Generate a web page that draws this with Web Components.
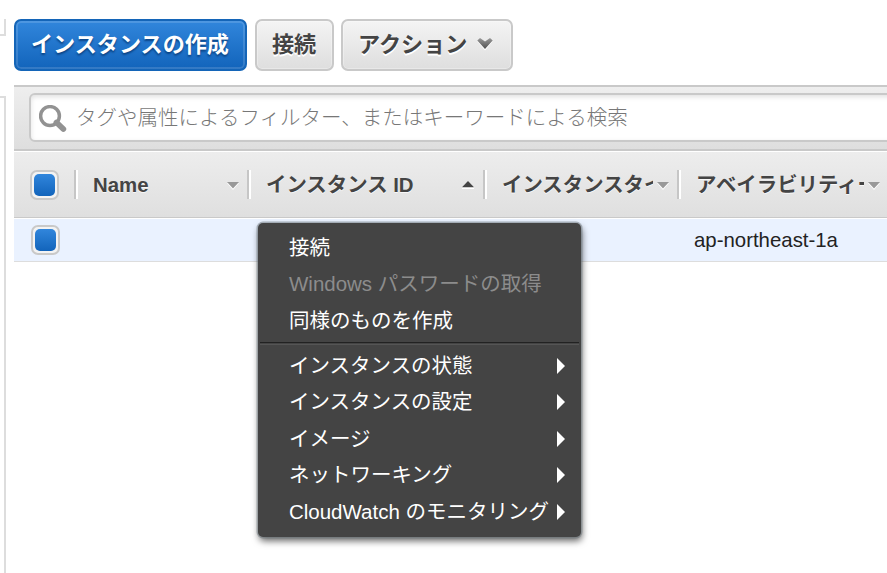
<!DOCTYPE html>
<html lang="ja">
<head>
<meta charset="utf-8">
<title>インスタンス</title>
<style>
html, body { margin: 0; height: 100%; overflow: hidden; background: #fff; }
body { font: 20.4px "Liberation Sans", "Noto Sans CJK JP", sans-serif; color: #222; }
</style>
</head>
<body>
<ec2-console></ec2-console>
<script>
function define(name, html) {
  const template = document.createElement('template');
  template.innerHTML = html;
  customElements.define(name, class extends HTMLElement {
    constructor() {
      super();
      this.attachShadow({ mode: 'open' }).append(template.content.cloneNode(true));
    }
  });
}

define('push-button', `
<style>
:host { display: flex; align-items: center; box-sizing: border-box; height: 52px; padding: 0 0 0 15px; border: 2px solid #c9c9c9; border-radius: 7px;
  background: linear-gradient(#f4f4f4, #dedede); box-shadow: inset 0 0 0 1px rgba(255,255,255,.3); color: #444; font-size: 22.1px; font-weight: bold; line-height: 32px; white-space: nowrap; text-shadow: 0 2px 0 #fff; flex: none; }
:host([primary]) { border-color: #1465b8; background: linear-gradient(#3186dc, #1264bb); box-shadow: inset 0 0 0 2px rgba(255,255,255,.14); color: #fff; text-shadow: 0 2px 2px #0b4485; }
</style><slot></slot>`);

define('chevron-icon', `
<style>:host { display: block; margin: -3px 0 0 10px; width: 16px; height: 12px; } svg { display: block; overflow: visible; }</style>
<svg width="16" height="12" viewBox="0 0 16 12"><defs><linearGradient id="g" x2="0" y2="1"><stop stop-color="#999"/><stop offset="1" stop-color="#505050"/></linearGradient></defs>
<path d="M0.5 3.5 3 1 8 4.500 13 1 15.500 3.500 8 12.500Z" fill="#fff"/><path d="M.3 2.500 3 0 8 3.500 13 0 15.700 2.500 8 11Z" fill="url(#g)"/></svg>`);

define('check-box', `
<style>
:host { display: block; box-sizing: border-box; width: 29px; height: 30px; padding: 2px; border: 2px solid #c9c9c9; border-radius: 7px; background: #f3f3f3; flex: none; }
i { display: block; height: 100%; border-radius: 5px; background: linear-gradient(#3186dc, #1264bb); }
</style><i></i>`);

define('search-field', `
<style>
:host { display: flex; align-items: center; box-sizing: border-box; height: 49px; margin-right: -10px; padding: 0 0 0 8px; border: 2px solid #c9c9c9; border-radius: 6px; background: #fff; box-shadow: inset 0 2px 5px rgba(0,0,0,.12); color: #777; line-height: 30px; white-space: nowrap; }
svg { display: block; flex: none; margin: 2px 9px 0 0; }
span { font-size: 20.5px; font-weight: 300; padding-top: 1px; }
</style>
<svg width="28" height="28" viewBox="0 0 28 28" fill="none" stroke="#929292"><circle cx="11" cy="11" r="9.400" stroke-width="3.500"/><path d="M17.500 17.500 24.300 24" stroke-width="5.800" stroke-linecap="round"/></svg>
<span><slot></slot></span>`);

define('column-head', `
<style>
:host { display: flex; align-items: center; box-sizing: border-box; height: 29px; border-left: 2px solid #c6c6c6; box-shadow: inset 2px 0 #fff; padding-left: 17px; font-weight: bold; color: #444; line-height: 30px; white-space: nowrap; flex: none; }
span { flex: 1; min-width: 0; overflow: hidden; text-shadow: 0 1px #f8f8f8; }
svg { display: block; flex: none; margin: 0 8px 0 4px; overflow: visible; }
.up { display: none; margin-right: 9px; }
:host([sorted]) .up { display: block; }
:host([sorted]) .down { display: none; }
</style>
<span><slot></slot></span>
<svg class="down" width="12" height="8" viewBox="0 0 12 8"><path d="M0 2H12L6 9Z" fill="#fff"/><path d="M0 1H12L6 7.500Z" fill="#999"/></svg>
<svg class="up" width="12" height="8" viewBox="0 0 12 8"><path d="M0 6H12V8H0Z" fill="#fff"/><path d="M0 6.300H12L6 0Z" fill="#444"/></svg>`);

define('side-rail', `
<style>
:host { display: flex; flex-direction: column; gap: 60px; box-sizing: border-box; width: 14px; padding: 19px 8px 0 0; flex: none; }
div { box-sizing: border-box; border-right: 2px solid #ddd; }
.top { height: 17px; border-bottom: 2px solid #ddd; }
.rest { flex: 1; border-top: 2px solid #ddd; }
</style><div class="top"></div><div class="rest"></div>`);

define('menu-item', `
<style>
:host { display: flex; align-items: center; justify-content: space-between; height: 36.5px; padding: 0 16px 0 31px; color: #fff; white-space: nowrap; line-height: 30px; font-size: 20.5px; }
:host([disabled]) { color: #8c8c8c; }
span { letter-spacing: -.01px; }
svg { display: none; flex: none; }
:host([more]) svg { display: block; }
</style><span><slot></slot></span>
<svg width="8" height="16" viewBox="0 0 8 16"><path d="M0 0 8 8 0 16Z" fill="#fff"/></svg>`);

define('context-menu', `
<style>
:host { display: block; box-sizing: border-box; width: 323px; height: 314px; padding-top: 6.500px; border-radius: 5px; background: #444; box-shadow: 0 0 0 1.5px rgba(110,120,125,.5), 1px 4px 7px rgba(0,0,0,.6); }
hr { height: 1px; margin: 3px 2px 4.500px; border: 0; background: #222; box-shadow: 0 2px #555; }
</style>
<menu-item>接続</menu-item>
<menu-item disabled>Windows パスワードの取得</menu-item>
<menu-item>同様のものを作成</menu-item>
<hr>
<menu-item more>インスタンスの状態</menu-item>
<menu-item more>インスタンスの設定</menu-item>
<menu-item more>イメージ</menu-item>
<menu-item more>ネットワーキング</menu-item>
<menu-item more>CloudWatch のモニタリング</menu-item>`);

define('ec2-console', `
<style>
:host { display: flex; height: 100%; overflow: hidden; }
main { flex: 1; min-width: 0; padding-top: 19px; }
.tools { display: flex; margin-bottom: 14px; }
.filter { box-sizing: border-box; height: 66px; padding: 6px 0 0 15px; border: solid #c9c9c9; border-width: 2px 0; background: linear-gradient(#eee, #dedede); }
.head { display: flex; align-items: center; box-sizing: border-box; height: 67px; padding-left: 16px; border-top: 1px solid #fff; border-bottom: 1px solid #c9c9c9; background: linear-gradient(#ededed, #dfdfdf); }
.row { display: flex; align-items: center; box-sizing: border-box; height: 44px; padding-left: 17px; border-top: 1px solid #fff; border-bottom: 1px solid #ddd; background: #eaf2ff; color: #222; }
.row span { margin-left: 634px; }
context-menu { position: absolute; left: 258px; top: 223px; }
</style>
<side-rail></side-rail>
<main>
  <div class="tools">
    <push-button primary style="width:233px">インスタンスの作成</push-button>
    <push-button style="width:79px;margin:0 7px 0 8px">接続</push-button>
    <push-button style="width:172px">アクション<chevron-icon></chevron-icon></push-button>
  </div>
  <div class="filter"><search-field>タグや属性によるフィルター、またはキーワードによる検索</search-field></div>
  <div class="head">
    <check-box></check-box>
    <column-head style="width:173px;margin-left:15px">Name</column-head>
    <column-head sorted style="width:236px">インスタンス ID</column-head>
    <column-head style="width:194px">インスタンスタイプ</column-head>
    <column-head style="width:211px">アベイラビリティー</column-head>
  </div>
  <div class="row"><check-box></check-box><span>ap-northeast-1a</span></div>
</main>
<context-menu></context-menu>`);
</script>
</body>
</html>
